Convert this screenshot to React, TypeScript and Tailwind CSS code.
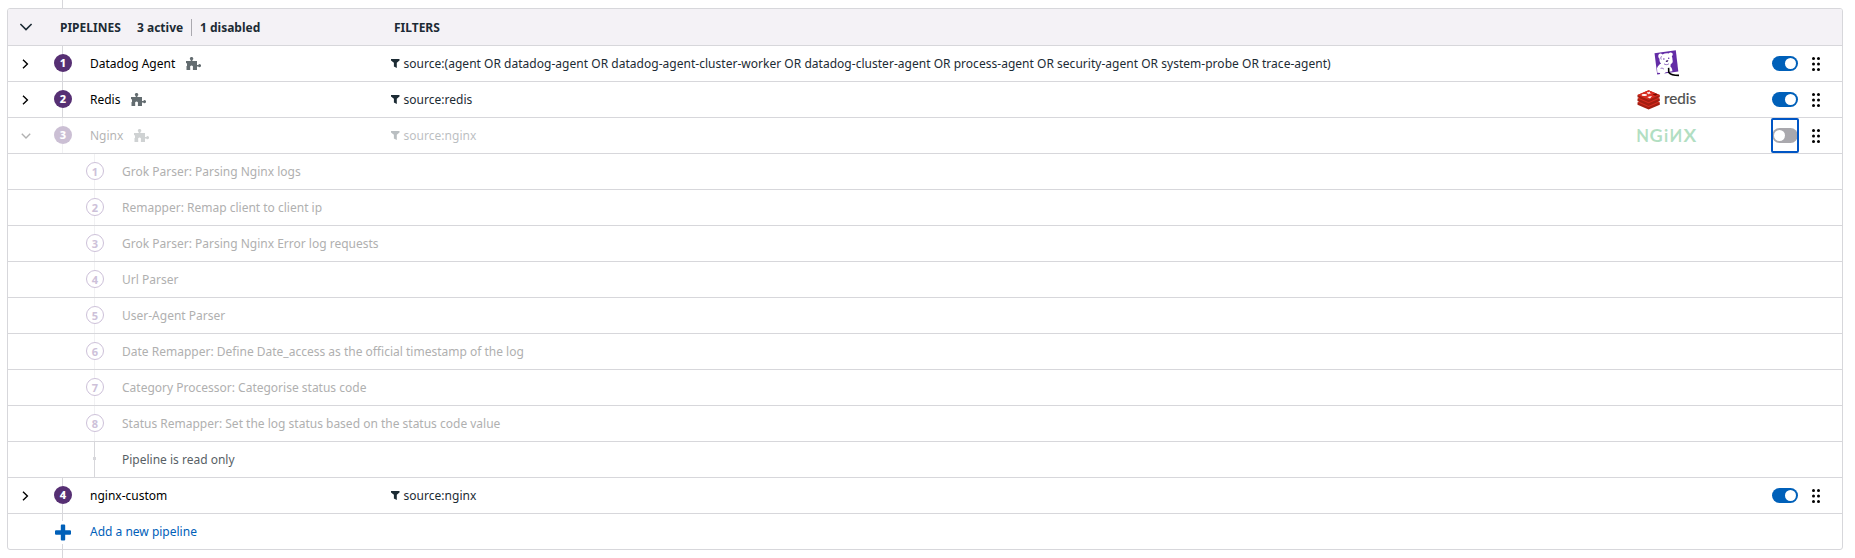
import type { ReactNode } from "react";

type Pipeline = {
  index: number;
  name: string;
  filter: string;
  integration?: boolean;
  disabled?: boolean;
  logo?: ReactNode;
};

const processors = [
  "Grok Parser: Parsing Nginx logs",
  "Remapper: Remap client to client ip",
  "Grok Parser: Parsing Nginx Error log requests",
  "Url Parser",
  "User-Agent Parser",
  "Date Remapper: Define Date_access as the official timestamp of the log",
  "Category Processor: Categorise status code",
  "Status Remapper: Set the log status based on the status code value",
];

function ChevronRight() {
  return (
    <svg width="7" height="10" viewBox="0 0 7 10" fill="none" stroke="#000" strokeWidth="1.4">
      <path d="M1 .8 5.4 5 1 9.2" />
    </svg>
  );
}

function ChevronDown({ large = false }: { large?: boolean }) {
  return large ? (
    <svg width="14" height="8" viewBox="0 0 14 8" fill="none" stroke="#1c2b34" strokeWidth="1.6">
      <path d="M1.4 1 7 6.6 12.6 1" />
    </svg>
  ) : (
    <svg width="10" height="6" viewBox="0 0 10 6" fill="none" stroke="#000" strokeWidth="1.4">
      <path d="M.8 .8 5 4.9 9.2 .8" />
    </svg>
  );
}

function PuzzleIcon() {
  return (
    <svg width="15" height="13" viewBox="0 0 15 13" fill="#636c70">
      <path d="M0 4h4.700V2.900a1.600 1.600 0 1 1 1.700 0V4H11v3.900h1.300a1.500 1.500 0 1 1 0 1.500H11V13H6.900V10.600a1.500 1.500 0 1 0-2.700 0V13H.5V8.900H1V6.300H0z" />
    </svg>
  );
}

function FunnelIcon() {
  return (
    <svg width="9" height="9" viewBox="0 0 9 9" fill="#1c2b34">
      <path d="M0 0h8.500v1.500L5.800 3.700V9L2.900 7.600V3.700L0 1.500z" />
    </svg>
  );
}

function DatadogLogo() {
  return (
    <svg width="26" height="27" viewBox="0 0 26 27">
      <path d="M.5 3.200 21.800.2 24.300 21.500 3.200 24.600z" fill="#632ca6" />
      <path
        d="M4.800 4.200c1.300-1 2.800-.6 3.700.4 2-1.300 4.300-1.500 6.300-1 .6-1 2.300-1.500 3.400-.5.900.9.700 2.600-.4 3.200.8 1.600.6 3 .9 4.500.2 1.500-.4 2.700-1.900 3.200l-.4 2.400c1.500 1.200 2 2.900 2 4.800l-6.700 1-3.100 3.300-3.400.8 1-3.300-2.900-.2-.3-4.500c.7-2.100 2.200-3.700 4.200-4.700-1.400-1.200-1.900-3-1.700-4.900C4.400 8.300 3.700 5.600 4.800 4.200z"
        fill="#fff"
      />
      <path
        d="M7.500 6.300c-.8 1-.9 2.200-.2 3.200M10 13.800c1.400 1.100 3.300 1.200 4.900 0M6.600 18.400c1.400-.5 2.500-.1 3.300.8"
        stroke="#632ca6"
        strokeWidth=".7"
        fill="none"
      />
      <circle cx="9.900" cy="8.900" r=".75" fill="#632ca6" />
      <circle cx="14.700" cy="8.200" r=".75" fill="#632ca6" />
      <path d="M11.700 10.900c.6-.7 2-.9 2.700-.3-.2.900-.9 1.300-1.500 1.300s-1.100-.3-1.200-1z" fill="#3c1768" />
      <path d="M14.400 17.800c1 1.700-.5 3.400.7 5 1.600 2.200 5.800 2.600 9.900 2.600" stroke="#000" strokeWidth="1.600" fill="none" />
    </svg>
  );
}

function RedisLogo() {
  return (
    <svg width="60" height="20" viewBox="0 0 60 20">
      <path d="M.5 12.500 11.600 8l11.200 4.500v2.300L11.600 19.600.5 14.800z" fill="#a41e11" />
      <path d="M.5 12.200 11.600 7.500l11.200 4.700L11.600 17z" fill="#d82c20" />
      <path d="M.5 8.700 11.600 4l11.200 4.700V11L11.600 15.900.5 11z" fill="#a41e11" />
      <path d="M.5 8.500 11.600 4l11.200 4.500L11.600 13.300z" fill="#d82c20" />
      <path d="M.5 5 11.600.3 22.800 5v2.300L11.600 12.200.5 7.300z" fill="#a41e11" />
      <path d="M.5 5 11.600.3 22.800 5 11.600 9.800z" fill="#d82c20" />
      <ellipse cx="7.300" cy="5" rx="2.800" ry="1.100" fill="#fff" />
      <path d="m9.800 1.900 1.800.4 1.500-.7-.3 1.100 1.700.5-1.900.3-.8 1-.6-1-1.700-.2 1-.5zM10.200 7l4.800-.9-2 2.300z" fill="#fff" />
      <path d="m15.500 4.600 3-1.200 2.500 1.200-2.800 1.100z" fill="#7a0c00" />
      <text
        x="27"
        y="13.500"
        textLength="32"
        lengthAdjust="spacingAndGlyphs"
        fontSize="14.500"
        fill="#4d4d4d"
        stroke="#4d4d4d"
        strokeWidth=".2"
        className="font-['Lato',sans-serif]"
      >
        redis
      </text>
    </svg>
  );
}

function NginxLogo() {
  return (
    <div className="flex h-[14px] w-[60px] items-center gap-[2px] font-['Lato',sans-serif] text-[16.5px] leading-[14px] font-bold text-[#009639]">
      <span className="flex w-[11px] justify-center">N</span>
      <span className="flex w-[12px] scale-x-110 justify-center">G</span>
      <span className="flex w-[4px] justify-center">i</span>
      <span className="flex w-[12px] -scale-x-100 justify-center">N</span>
      <span className="flex w-[12px] scale-x-115 justify-center">X</span>
    </div>
  );
}

function Toggle({ on }: { on: boolean }) {
  return (
    <div
      className={
        on
          ? "flex h-[15px] w-[26px] items-center justify-end rounded-full bg-[#0060b9] px-[2px]"
          : "flex h-[15px] w-[26px] items-center rounded-full bg-[#a9a8ad] px-[2px]"
      }
    >
      <div className="size-[11px] rounded-full bg-white" />
    </div>
  );
}

function DragHandle() {
  return (
    <svg width="8" height="14" viewBox="0 0 8 14" fill="#000">
      {[1.5, 7, 12.5].map((y) => (
        <g key={y}>
          <circle cx="1.500" cy={y} r="1.500" />
          <circle cx="6.500" cy={y} r="1.500" />
        </g>
      ))}
    </svg>
  );
}

function Rail({ children, faded = false }: { children: ReactNode; faded?: boolean }) {
  const line = faded ? "mr-px w-px bg-[#f1f1f3]" : "mr-px w-px bg-[#d7d7db]";
  return (
    <div className="flex w-[18px] shrink-0 flex-col items-center self-stretch">
      <div className={`${line} h-2`} />
      {children}
      <div className={`${line} grow`} />
    </div>
  );
}

function PipelineRow({ index, name, filter, integration, disabled, logo }: Pipeline) {
  const fade = disabled ? "opacity-30" : "";
  return (
    <div className="flex h-9 items-center border-b border-[#d7d7db]">
      <div className={`flex w-[46px] shrink-0 justify-center pr-[11px] ${fade}`}>
        {disabled ? <ChevronDown /> : <ChevronRight />}
      </div>
      <Rail faded={disabled}>
        <div
          className={`flex size-[18px] shrink-0 items-center justify-center rounded-full bg-[#562f73] pb-px text-[11px] leading-none font-extrabold text-white ${fade}`}
        >
          {index}
        </div>
      </Rail>
      <div className={`flex w-[319px] shrink-0 items-center gap-[11px] pl-[18px] text-black ${fade}`}>
        <span>{name}</span>
        {integration && <PuzzleIcon />}
      </div>
      <div className={`flex grow items-center gap-[3.5px] tracking-[0.024px] text-[#1c2b34] ${fade}`}>
        <FunnelIcon />
        <span>{filter}</span>
      </div>
      <div className={`mr-[74px] flex w-[60px] shrink-0 justify-center ${fade}`}>{logo}</div>
      <div
        className={
          disabled
            ? "-mr-px flex h-[35px] w-7 shrink-0 items-center justify-center rounded-[2px] outline-2 -outline-offset-2 outline-[#0055c4]"
            : "-mr-px flex h-[35px] w-7 shrink-0 items-center justify-center"
        }
      >
        <Toggle on={!disabled} />
      </div>
      <div className="mr-[22px] ml-[14px] shrink-0">
        <DragHandle />
      </div>
    </div>
  );
}

function ProcessorRow({ index, label }: { index: number; label: string }) {
  return (
    <div className="flex h-9 items-center border-b border-[#d7d7db] pl-[78px]">
      <Rail faded>
        <div className="flex size-[18px] shrink-0 items-center justify-center rounded-full border border-[#cdc1d9] text-[11px] leading-none font-bold text-[#cdc1d9]">
          {index}
        </div>
      </Rail>
      <span className="pl-[18px] text-[#b0b0b0]">{label}</span>
    </div>
  );
}

export default function App() {
  return (
    <div className="h-[558px] overflow-hidden bg-white pr-3 pl-[7px] font-['Noto_Sans',sans-serif] text-[12px] leading-4">
      <div className="ml-[55px] h-2 w-px bg-[#d7d7db]" />
      <div className="w-[1836px] overflow-hidden rounded-[3px] border border-[#d7d7db]">
        <div className="flex h-[37px] items-center border-b border-[#d7d7db] bg-[#f4f2f6] font-bold text-[#1c2b34]">
          <div className="flex w-[52px] shrink-0 pl-[11px]">
            <ChevronDown large />
          </div>
          <div className="flex w-[334px] shrink-0 items-center pt-px">
            <span className="w-[77px]">PIPELINES</span>
            <span className="w-[54px]">3 active</span>
            <span className="h-[17px] w-px bg-[#aaa9af]" />
            <span className="pl-[8px]">1 disabled</span>
          </div>
          <span className="pt-px">FILTERS</span>
        </div>
        <PipelineRow
          index={1}
          name="Datadog Agent"
          integration
          filter="source:(agent OR datadog-agent OR datadog-agent-cluster-worker OR datadog-cluster-agent OR process-agent OR security-agent OR system-probe OR trace-agent)"
          logo={<DatadogLogo />}
        />
        <PipelineRow index={2} name="Redis" integration filter="source:redis" logo={<RedisLogo />} />
        <PipelineRow index={3} name="Nginx" integration disabled filter="source:nginx" logo={<NginxLogo />} />
        {processors.map((label, i) => (
          <ProcessorRow key={label} index={i + 1} label={label} />
        ))}
        <div className="flex h-9 items-center border-b border-[#d7d7db] pl-[78px]">
          <div className="flex w-[18px] flex-col items-center self-stretch">
            <div className="mr-px h-[15px] w-px bg-[#d7d7db]" />
            <div className="mr-px size-[3px] bg-[#d7d7db]" />
            <div className="mr-px w-px grow bg-[#d7d7db]" />
          </div>
          <span className="pl-[18px] text-[#585f66]">Pipeline is read only</span>
        </div>
        <PipelineRow index={4} name="nginx-custom" filter="source:nginx" />
        <div className="flex h-[35px] items-center pl-[46px] text-[#0060b9]">
          <div className="flex w-[18px] flex-col items-center self-stretch">
            <div className="mr-px h-[7px] w-px bg-[#d7d7db]" />
            <svg width="18" height="23" viewBox="0 0 18 23" fill="#0060b9">
              <path d="M6.800 4.500a1 1 0 0 1 1-1h2.400a1 1 0 0 1 1 1v4.800H16a1 1 0 0 1 1 1v2.400a1 1 0 0 1-1 1h-4.800v4.800a1 1 0 0 1-1 1H7.800a1 1 0 0 1-1-1v-4.800H2a1 1 0 0 1-1-1v-2.400a1 1 0 0 1 1-1h4.800z" />
            </svg>
            <div className="mr-px w-px grow bg-[#d7d7db]" />
          </div>
          <span className="pl-[18px]">Add a new pipeline</span>
        </div>
      </div>
      <div className="ml-[55px] h-4 w-px bg-[#d7d7db]" />
    </div>
  );
}
